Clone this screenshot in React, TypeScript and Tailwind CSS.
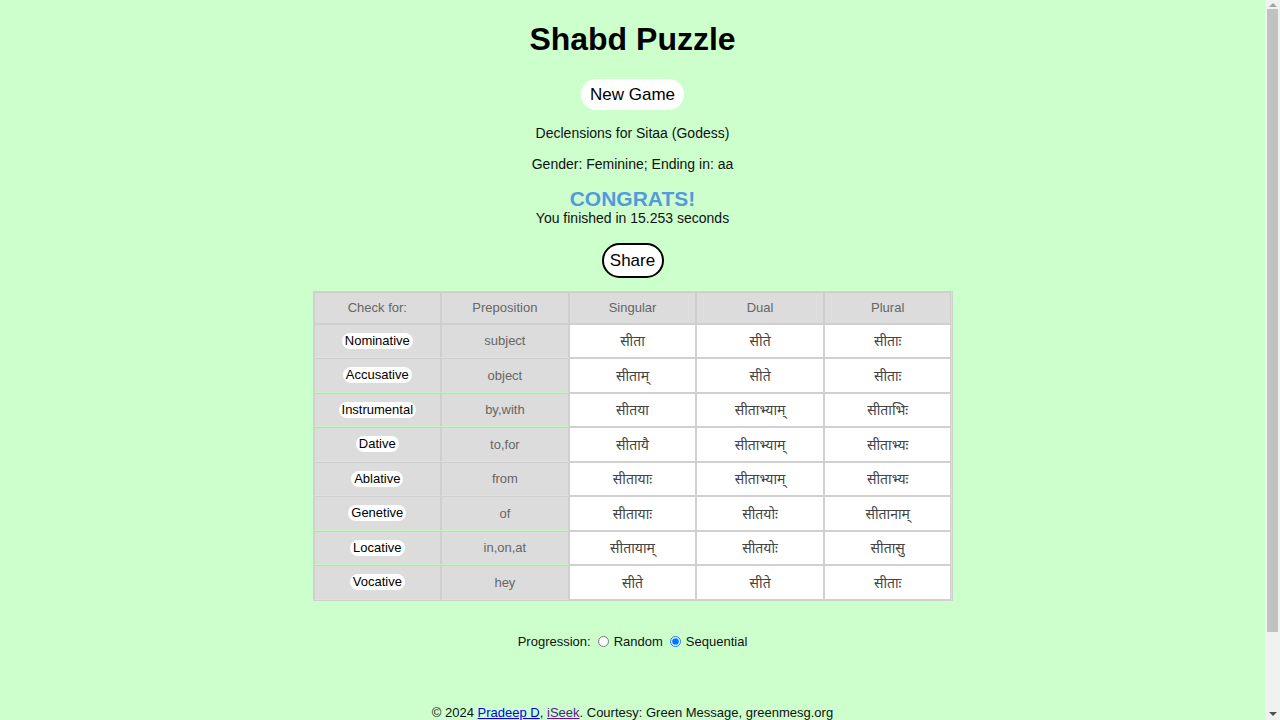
import React, { useState } from 'react';

const rows = [
  ['Nominative', 'subject', 'सीता', 'सीते', 'सीताः'],
  ['Accusative', 'object', 'सीताम्', 'सीते', 'सीताः'],
  ['Instrumental', 'by,with', 'सीतया', 'सीताभ्याम्', 'सीताभिः'],
  ['Dative', 'to,for', 'सीतायै', 'सीताभ्याम्', 'सीताभ्यः'],
  ['Ablative', 'from', 'सीतायाः', 'सीताभ्याम्', 'सीताभ्यः'],
  ['Genetive', 'of', 'सीतायाः', 'सीतयोः', 'सीतानाम्'],
  ['Locative', 'in,on,at', 'सीतायाम्', 'सीतयोः', 'सीतासु'],
  ['Vocative', 'hey', 'सीते', 'सीते', 'सीताः'],
];

const headers = ['Check for:', 'Preposition', 'Singular', 'Dual', 'Plural'];

function App() {
  const [mode, setMode] = useState<'random' | 'sequential'>('sequential');

  return (
    <div className="h-[720px] flex bg-[#ccffcc] overflow-hidden">
      <div
        className="flex-1 text-black flex flex-col items-center"
        style={{ fontFamily: '"Liberation Sans", Arial, "Noto Sans", sans-serif' }}
      >
        <h1 className="mt-[20px] text-[32px] leading-[38px] font-bold">Shabd Puzzle</h1>

        <button className="mt-[21px] h-[34px] px-[9px] rounded-full bg-white text-[17px] text-black">
          New Game
        </button>

        <p className="mt-[15px] text-[14px] leading-[16px] text-[#111]">Declensions for Sitaa (Godess)</p>
        <p className="mt-[15px] text-[14px] leading-[16px] text-[#111]">Gender: Feminine; Ending in: aa</p>

        <div className="mt-[16px] text-[21px] leading-[22px] font-bold text-[#5599dd]">CONGRATS!</div>
        <div className="text-[14px] leading-[17px] text-[#111]">You finished in 15.253 seconds</div>

        <button className="mt-[16px] h-[37px] w-[62px] rounded-full border-2 border-black bg-white text-[17px]">
          Share
        </button>

        <div className="mt-[13px] w-[640px] border border-[#d0d0d0] bg-[#dcdcdc]">
          <div className="grid grid-cols-5">
            {headers.map(h => (
              <div
                key={h}
                className="h-[32px] flex items-center justify-center border border-[#cfcfcf] bg-[#dcdcdc] text-[13px] text-[#666]"
              >
                {h}
              </div>
            ))}
          </div>
          {rows.map(r => (
            <div key={r[0]} className="grid grid-cols-5">
              <div className="h-[34.5px] flex items-center justify-center border border-[#cfcfcf] border-b-[#c4f4c4] bg-[#dcdcdc]">
                <span className="bg-white rounded-full px-[3px] text-[13px] leading-[16px] text-black">{r[0]}</span>
              </div>
              <div className="h-[34.5px] flex items-center justify-center border border-[#cfcfcf] border-b-[#c4f4c4] bg-[#dcdcdc] text-[13px] text-[#666]">
                {r[1]}
              </div>
              {r.slice(2).map((w, i) => (
                <div
                  key={i}
                  className="h-[34.5px] flex items-center justify-center border border-[#d0d0d0] bg-white text-[14px] text-[#444]"
                  style={{ fontFamily: '"Noto Sans", "Liberation Sans", sans-serif' }}
                >
                  {w}
                </div>
              ))}
            </div>
          ))}
        </div>

        <div className="mt-[31px] flex items-center text-[13px] text-[#111]">
          <span>Progression:</span>
          <input
            type="radio"
            name="prog"
            className="ml-[7px] mr-[5px] w-[11px] h-[11px]"
            checked={mode === 'random'}
            onChange={() => setMode('random')}
          />
          <span>Random</span>
          <input
            type="radio"
            name="prog"
            className="ml-[7px] mr-[5px] w-[11px] h-[11px]"
            checked={mode === 'sequential'}
            onChange={() => setMode('sequential')}
          />
          <span>Sequential</span>
        </div>

        <footer className="mt-[54px] text-[13px] leading-[15px] text-[#111]">
          © 2024{' '}
          <a href="#" className="text-[#0000ee] underline">Pradeep D</a>,{' '}
          <a href="#" className="text-[#551a8b] underline">iSeek</a>. Courtesy: Green Message, greenmesg.org
        </footer>
      </div>

      {/* scrollbar strip */}
      <div className="w-[15px] bg-[#f1f1f1] flex flex-col items-center">
        <div className="h-[9px] w-full flex items-center justify-center">
          <div className="w-0 h-0 border-x-[4px] border-x-transparent border-b-[4px] border-b-[#a3a3a3]" />
        </div>
        <div className="w-[11px] h-[623px] bg-[#c1c1c1]" />
        <div className="flex-1" />
        <div className="h-[12px] w-full flex items-center justify-center">
          <div className="w-0 h-0 border-x-[4px] border-x-transparent border-t-[4px] border-t-[#505050]" />
        </div>
      </div>
    </div>
  );
}

export default App;
